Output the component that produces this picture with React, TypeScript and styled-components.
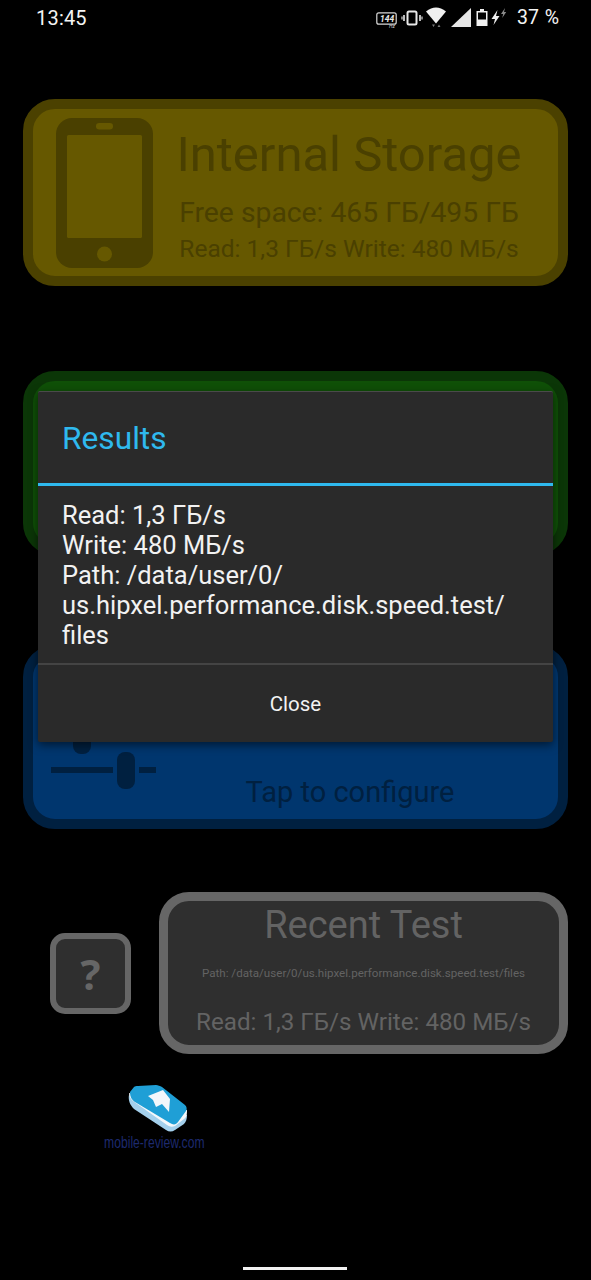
import React from 'react';
import styled, { createGlobalStyle } from 'styled-components';

const GlobalStyle = createGlobalStyle`
  html, body {
    margin: 0;
    padding: 0;
    background: #000;
  }
  * { box-sizing: border-box; }
`;

const palette = {
  yellow: { fill: '#665800', edge: '#4b4100', ink: '#4a4000' },
  green: { fill: '#0f5007', edge: '#0b3607', ink: '#0b3607' },
  blue: { fill: '#00366e', edge: '#002040', ink: '#002040' },
};

type Tone = keyof typeof palette;

const Page = styled.div`
  position: relative;
  width: 591px;
  height: 1280px;
  overflow: hidden;
  background: #000;
  font-family: Roboto, 'Liberation Sans', sans-serif;
`;

const StatusBar = styled.div`
  height: 35px;
  padding: 0 32px 0 36px;
  display: flex;
  align-items: center;
  color: #f4f4f4;
`;

const Clock = styled.span`
  font-size: 20px;
  letter-spacing: 0.2px;
  flex: 1;
`;

const StatusIcons = styled.div`
  display: flex;
  align-items: center;
`;

const Battery = styled.span`
  font-size: 19.5px;
  margin-left: 10px;
  word-spacing: 1px;
`;

const Card = styled.section<{ $tone: Tone; $top: number; $height: number }>`
  width: 545px;
  height: ${(p) => p.$height}px;
  margin: ${(p) => p.$top}px 0 0 23px;
  padding: 0 21px 0 23px;
  border: 10.5px solid ${(p) => palette[p.$tone].edge};
  border-radius: 32px;
  background: ${(p) => palette[p.$tone].fill};
  color: ${(p) => palette[p.$tone].ink};
  display: flex;
  align-items: center;
  gap: 8px;
`;

const CardText = styled.div`
  flex: 1;
  align-self: stretch;
  display: flex;
  flex-direction: column;
  align-items: center;
`;

const CardTitle = styled.div`
  margin-top: 16px;
  font-size: 49px;
  line-height: 60px;
  white-space: nowrap;
`;

const FreeSpace = styled.div`
  margin-top: 12px;
  font-size: 28.3px;
  line-height: 32px;
  white-space: nowrap;
`;

const Speeds = styled.div`
  margin-top: 6px;
  font-size: 24.5px;
  line-height: 28px;
  white-space: nowrap;
`;

const ConfigHint = styled.div`
  margin-top: auto;
  margin-bottom: 9px;
  font-size: 29px;
  line-height: 36px;
  white-space: nowrap;
`;

const SliderIcon = styled.svg`
  flex: none;
  margin: 0 -1px 0 -5px;
`;

const BottomRow = styled.div`
  margin: 63px 23px 0 50px;
  display: flex;
  align-items: center;
  justify-content: space-between;
`;

const HelpButton = styled.div`
  width: 81px;
  height: 81px;
  border: 6px solid #666;
  border-radius: 15px;
  background: #2f2f2f;
  color: #666;
  display: flex;
  align-items: center;
  justify-content: center;
  font-family: 'Open Sans', sans-serif;
  font-weight: 700;
  font-size: 42px;
`;

const RecentCard = styled.div`
  width: 409px;
  height: 162px;
  border: 9px solid #666;
  border-radius: 30px;
  background: #2f2f2f;
  color: #636363;
  display: flex;
  flex-direction: column;
  align-items: center;
`;

const RecentTitle = styled.div`
  font-size: 38px;
  line-height: 44px;
  margin-top: 2px;
`;

const RecentPath = styled.div`
  margin-top: 19px;
  font-size: 11.6px;
  line-height: 14px;
`;

const RecentSpeeds = styled.div`
  margin-top: 27px;
  font-size: 24.2px;
  line-height: 30px;
`;

const Dialog = styled.div`
  position: absolute;
  left: 38px;
  top: 391px;
  width: 515px;
  height: 351px;
  background: #2a2a2a;
  border-top: 1px solid #4a4a4a;
  border-radius: 2px;
  box-shadow: 0 3px 10px rgba(0, 0, 0, 0.55);
  display: flex;
  flex-direction: column;
`;

const DialogTitle = styled.div`
  height: 91px;
  padding: 2px 0 0 24px;
  display: flex;
  align-items: center;
  color: #2fb9ee;
  font-size: 31.7px;
`;

const DialogRule = styled.div`
  height: 3px;
  background: #2fb9ee;
`;

const DialogBody = styled.div`
  padding: 14px 24px 13px;
  color: #f2f2f2;
  font-size: 25.5px;
  line-height: 30px;
`;

const BodyLine = styled.div`
  white-space: nowrap;
`;

const DialogButton = styled.div`
  flex: 1;
  border-top: 2px solid #444;
  display: flex;
  align-items: center;
  justify-content: center;
  color: #f2f2f2;
  font-size: 20.5px;
`;

const Watermark = styled.div`
  position: absolute;
  left: 100px;
  top: 1085px;
  width: 108px;
  display: flex;
  flex-direction: column;
  align-items: center;
`;

const LogoMark = styled.svg`
  margin-left: 8px;
`;

const WatermarkText = styled.div`
  margin-top: 0;
  font-family: 'Liberation Sans', sans-serif;
  font-size: 16.5px;
  line-height: 18px;
  color: #1d2a6e;
  white-space: nowrap;
  transform: scaleX(0.735);
`;

const HomeBar = styled.div`
  position: absolute;
  left: 243px;
  top: 1267px;
  width: 104px;
  height: 3px;
  background: #f2f2f2;
`;

const StatusGlyphs = () => (
  <svg width="131" height="35" viewBox="377 0 131 35">
    <rect x="377.8" y="12.8" width="19.4" height="11.4" rx="2" fill="none" stroke="#d8d8d8" strokeWidth="1.2" />
    <text x="381" y="22" fill="#e8e8e8" fontSize="8.5" fontStyle="italic" fontWeight="700" fontFamily="Roboto, sans-serif">144</text>
    <text x="390" y="28" fill="#d0d0d0" fontSize="5" fontStyle="italic" fontFamily="Roboto, sans-serif">Hz</text>
    <rect x="408.5" y="11.5" width="9" height="13" rx="1.5" fill="none" stroke="#e8e8e8" strokeWidth="2" />
    <path d="M405 15v6M421 15v6" stroke="#e8e8e8" strokeWidth="1.6" />
    <path d="M403 16.5v3M423 16.5v3" stroke="#d8d8d8" strokeWidth="1.2" />
    <path d="M427 11.5Q437 3.5 447 11.5L437 23.5Z" fill="#f0f0f0" />
    <path d="M433 24.5h3l-1.5 2.6ZM438.5 27h3l-1.5-2.6Z" fill="#777" />
    <path d="M472 8V27H452Z" fill="#e6e6e6" />
    <path d="M481 9h4v2h3.5v15h-11V11H481Z" fill="#f0f0f0" />
    <rect x="479" y="12.5" width="8" height="7" fill="#000" />
    <path d="M498.5 10l-6 9h3.5l-1.5 6 6-9h-3.5Z" fill="#f0f0f0" />
    <path d="M506 8l-4 6h2.2l-1 4 4-6H505Z" fill="#8a8a8a" />
  </svg>
);

const PhoneIcon = ({ color }: { color: string }) => (
  <svg width="97" height="150" viewBox="0 0 97 150" style={{ flex: 'none' }}>
    <rect width="97" height="150" rx="16" fill={color} />
    <rect x="11" y="17" width="75" height="103" rx="1.5" fill={palette.yellow.fill} />
    <rect x="40" y="5" width="17" height="6.5" rx="3.2" fill={palette.yellow.fill} />
    <circle cx="48.5" cy="136" r="7.5" fill={palette.yellow.fill} />
  </svg>
);

const SlidersGlyph = ({ color }: { color: string }) => (
  <SliderIcon width="105" height="130" viewBox="51 672 105 130">
    <g fill={color}>
      <rect x="51" y="767" width="62" height="6" />
      <rect x="117" y="752" width="18" height="37" rx="8" />
      <rect x="139" y="767" width="17" height="6" />
      <rect x="73" y="717" width="18" height="37" rx="8" />
    </g>
  </SliderIcon>
);

const MobileReviewLogo = () => (
  <LogoMark width="60" height="48" viewBox="129 1085 60 48">
    <path d="M130 1095c-1 5 1 10 5 14l32 21c3 2 6 2 9 0l9-6c2-2 3-5 3-9Z" fill="#a4d0ec" />
    <path d="M130 1093c0 3 1 5 4 8l34 24c3 2 5 2 8 1l9-7c3-2 3-5 3-9Z" fill="#f4f8fb" />
    <path d="M131 1092l4-5c1-1 2-1 4-1l18-1c2 0 4 1 6 2l23 18c2 2 2 4 1 6l-8 11c-2 3-5 3-8 1l-35-21c-3-2-5-5-5-10Z" fill="#1f9fd6" />
    <path d="M149 1096l15-6 7 9-1 13-7-8-6 3-3-7Z" fill="#f2f7fb" />
  </LogoMark>
);

export default function App() {
  return (
    <Page>
      <GlobalStyle />
      <StatusBar>
        <Clock>13:45</Clock>
        <StatusIcons>
          <StatusGlyphs />
          <Battery>37 %</Battery>
        </StatusIcons>
      </StatusBar>

      <Card $tone="yellow" $top={64} $height={187}>
        <PhoneIcon color={palette.yellow.ink} />
        <CardText>
          <CardTitle>Internal Storage</CardTitle>
          <FreeSpace>Free space: 465 ГБ/495 ГБ</FreeSpace>
          <Speeds>Read: 1,3 ГБ/s Write: 480 МБ/s</Speeds>
        </CardText>
      </Card>

      <Card $tone="green" $top={85} $height={184} />

      <Card $tone="blue" $top={90} $height={184}>
        <SlidersGlyph color={palette.blue.ink} />
        <CardText>
          <ConfigHint>Tap to configure</ConfigHint>
        </CardText>
      </Card>

      <BottomRow>
        <HelpButton>?</HelpButton>
        <RecentCard>
          <RecentTitle>Recent Test</RecentTitle>
          <RecentPath>Path: /data/user/0/us.hipxel.performance.disk.speed.test/files</RecentPath>
          <RecentSpeeds>Read: 1,3 ГБ/s Write: 480 МБ/s</RecentSpeeds>
        </RecentCard>
      </BottomRow>

      <Dialog>
        <DialogTitle>Results</DialogTitle>
        <DialogRule />
        <DialogBody>
          <BodyLine>Read: 1,3 ГБ/s</BodyLine>
          <BodyLine>Write: 480 МБ/s</BodyLine>
          <BodyLine>Path: /data/user/0/</BodyLine>
          <BodyLine>us.hipxel.performance.disk.speed.test/</BodyLine>
          <BodyLine>files</BodyLine>
        </DialogBody>
        <DialogButton>Close</DialogButton>
      </Dialog>

      <Watermark>
        <MobileReviewLogo />
        <WatermarkText>mobile-review.com</WatermarkText>
      </Watermark>
      <HomeBar />
    </Page>
  );
}
